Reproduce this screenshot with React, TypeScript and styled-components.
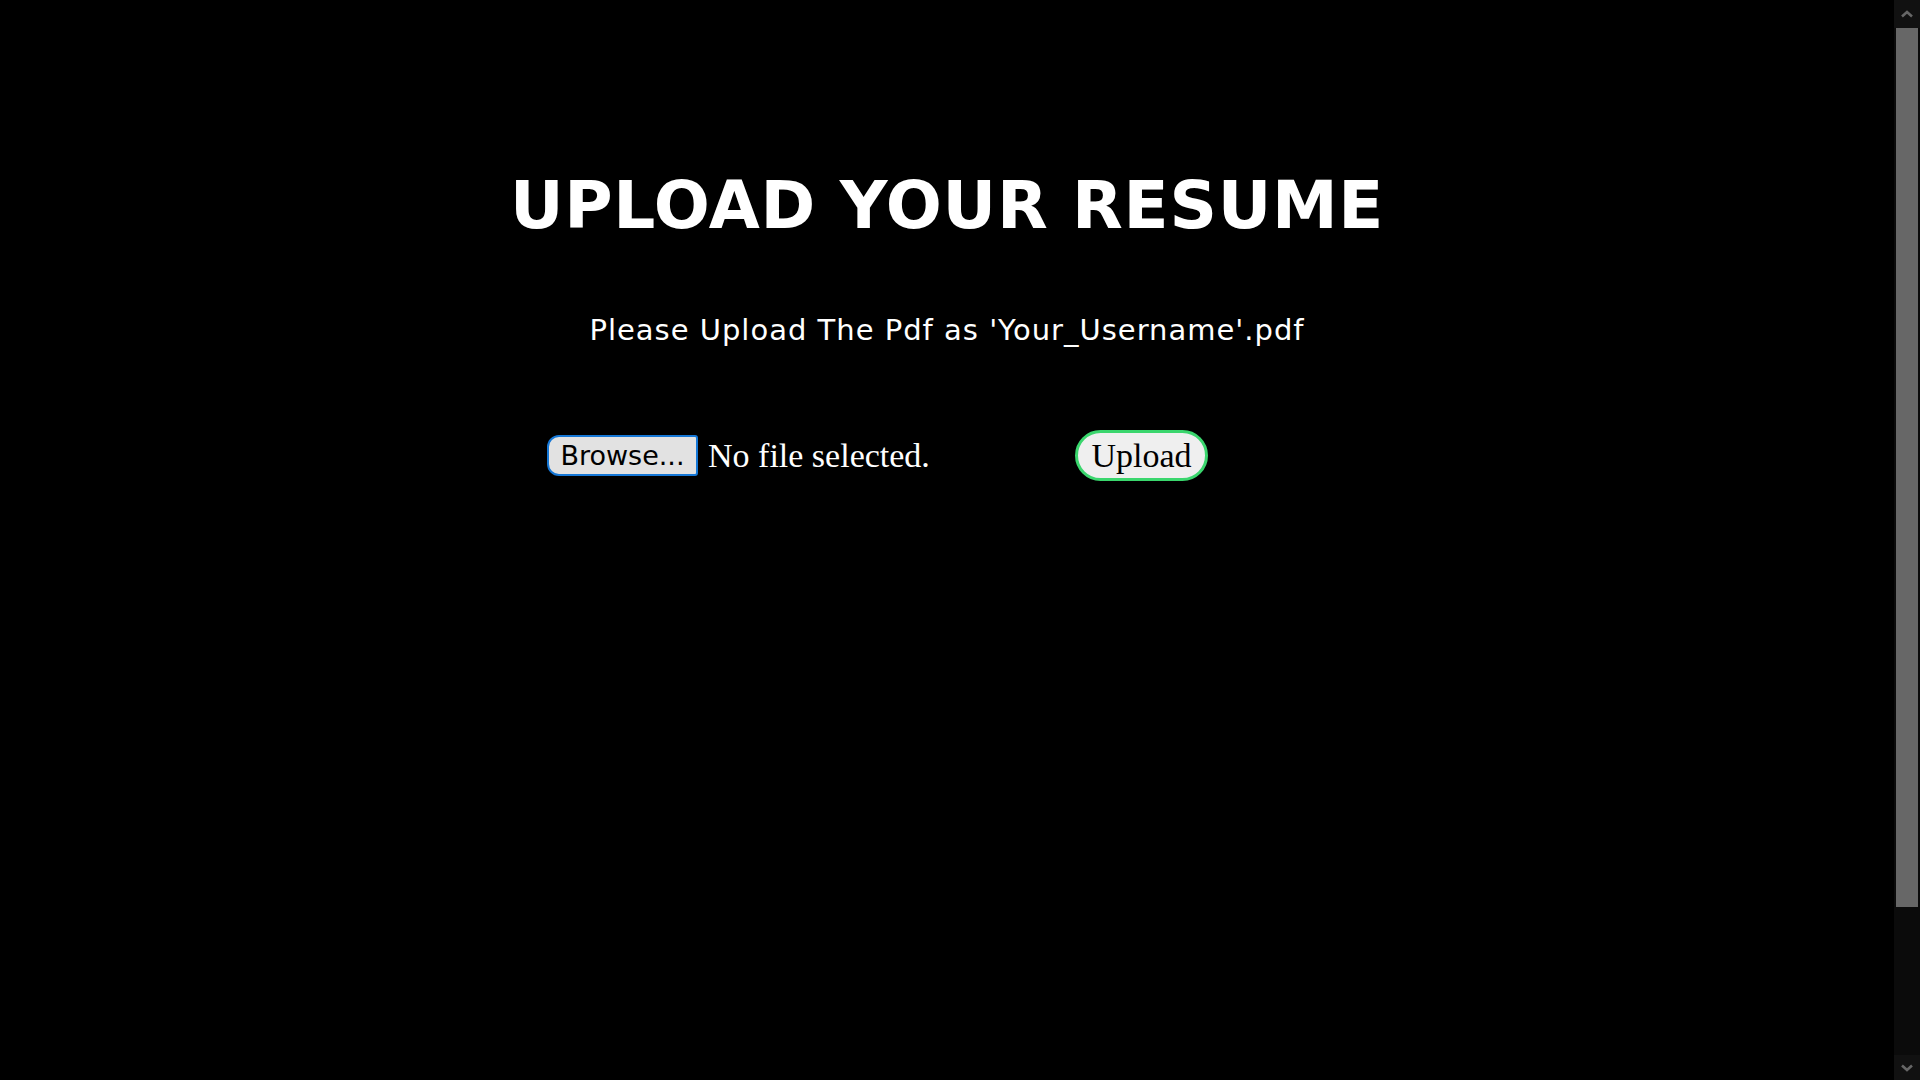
import React, { useState } from 'react';
import styled, { createGlobalStyle } from 'styled-components';

const GlobalStyle = createGlobalStyle`
  html {
    background: #000;
  }
  body {
    margin: 0;
    background: #000;
    color: #fff;
    font-family: "DejaVu Sans", sans-serif;
    overflow: hidden;
  }
`;

const PageContainer = styled.div`
  height: 100vh;
  display: flex;
  flex-direction: column;
  align-items: center;
  padding: 166px 26px 0 0;
  box-sizing: border-box;
`;

const Title = styled.h1`
  margin: 0;
  font-family: "DejaVu Sans", sans-serif;
  font-weight: 700;
  font-size: 66px;
  line-height: 80px;
  letter-spacing: 0.7px;
  color: #fff;
`;

const Subtitle = styled.p`
  margin: 67px 0 0;
  font-family: "DejaVu Sans", sans-serif;
  font-size: 29px;
  line-height: 34px;
  letter-spacing: 1px;
  color: #fff;
`;

const UploadForm = styled.form`
  display: flex;
  align-items: center;
  width: 806px;
  margin-top: 83px;
  margin-left: 6px;
`;

const FilePicker = styled.label`
  display: flex;
  align-items: center;
  width: 528px;
  cursor: pointer;

  input {
    display: none;
  }
`;

const BrowseButton = styled.span`
  display: inline-flex;
  align-items: center;
  justify-content: center;
  width: 151px;
  height: 41px;
  box-sizing: border-box;
  background: #e2e2e2;
  border: 2px solid #1577d6;
  border-radius: 12px 3px 3px 12px;
  font-family: "DejaVu Sans", sans-serif;
  font-size: 27px;
  color: #000;
`;

const FileName = styled.span`
  margin-left: 10px;
  font-family: "Liberation Serif", serif;
  font-size: 34px;
  color: #fff;
`;

const UploadButton = styled.button`
  width: 133px;
  height: 51px;
  box-sizing: border-box;
  background: #efefef;
  border: 3px solid #3ad66d;
  border-radius: 26px;
  font-family: "Liberation Serif", serif;
  font-size: 34px;
  color: #000;
  padding: 0;
  cursor: pointer;
`;

/* window scrollbar as it appears in the capture */
const ScrollBar = styled.div`
  position: fixed;
  top: 0;
  right: 0;
  width: 26px;
  height: 100vh;
  display: flex;
  flex-direction: column;
  background: #0b0b0b;
`;

const ScrollButton = styled.div<{ $h: number }>`
  height: ${(p) => p.$h}px;
  flex: none;
  display: flex;
  align-items: center;
  justify-content: center;
  background: #111;
`;

const ScrollTrack = styled.div`
  flex: 1;
  padding: 0 2px;
  display: flex;
  flex-direction: column;
`;

const ScrollThumb = styled.div`
  height: 879px;
  background: #676767;
`;

const Arrow: React.FC<{ down?: boolean }> = ({ down }) => (
  <svg width="12" height="8" viewBox="0 0 12 8">
    <path
      d={down ? 'M1 1.5 L6 6 L11 1.5' : 'M1 6.5 L6 2 L11 6.5'}
      fill="none"
      stroke="#666"
      strokeWidth="2.6"
    />
  </svg>
);

const App: React.FC = () => {
  const [fileName, setFileName] = useState<string | null>(null);

  return (
    <>
      <GlobalStyle />
      <PageContainer>
        <Title>UPLOAD YOUR RESUME</Title>
        <Subtitle>Please Upload The Pdf as 'Your_Username'.pdf</Subtitle>
        <UploadForm onSubmit={(e) => e.preventDefault()}>
          <FilePicker>
            <input
              type="file"
              accept="application/pdf"
              onChange={(e) => setFileName(e.target.files?.[0]?.name ?? null)}
            />
            <BrowseButton>Browse...</BrowseButton>
            <FileName>{fileName || 'No file selected.'}</FileName>
          </FilePicker>
          <UploadButton type="submit">Upload</UploadButton>
        </UploadForm>
      </PageContainer>
      <ScrollBar>
        <ScrollButton $h={28}>
          <Arrow />
        </ScrollButton>
        <ScrollTrack>
          <ScrollThumb />
        </ScrollTrack>
        <ScrollButton $h={25}>
          <Arrow down />
        </ScrollButton>
      </ScrollBar>
    </>
  );
};

export default App;
